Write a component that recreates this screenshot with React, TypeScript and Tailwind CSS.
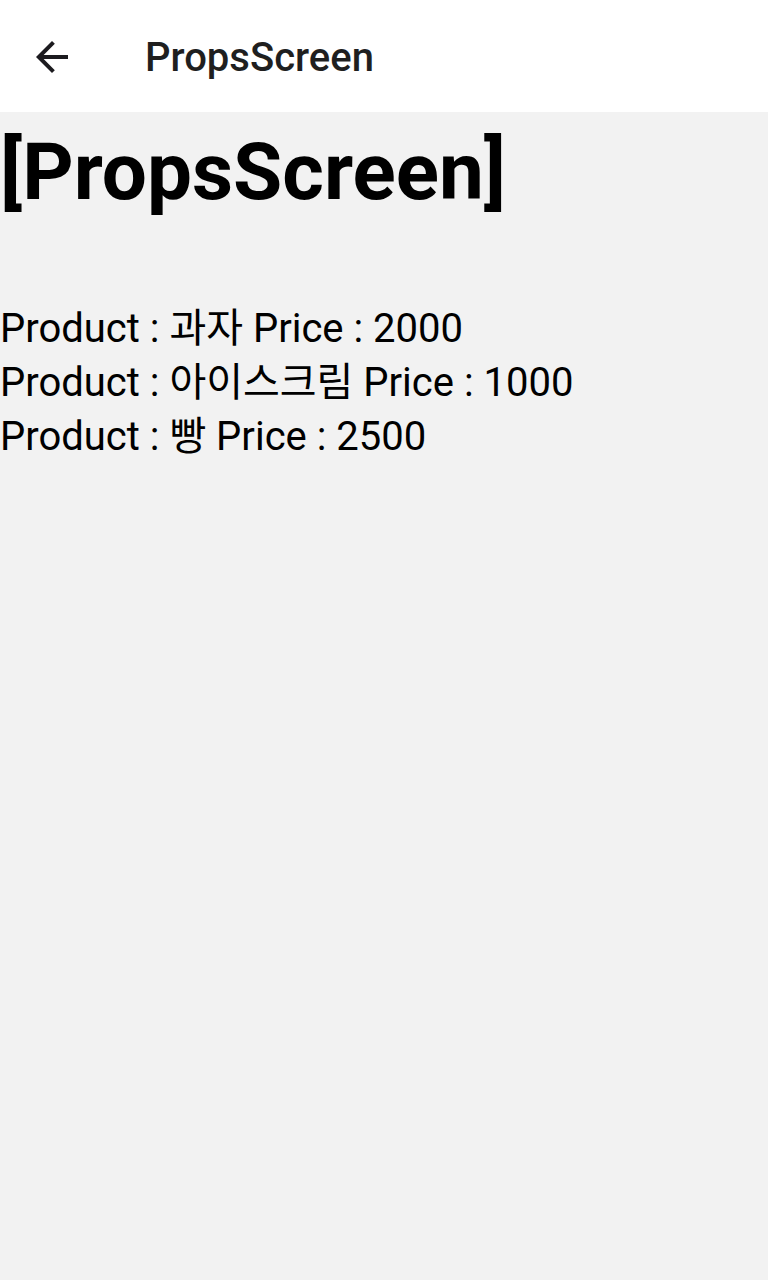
const products = [
    { name: "과자", price: 2000 },
    { name: "아이스크림", price: 1000 },
    { name: "빵", price: 2500 },
];

export default function App() {
    return (
        <div className="min-h-[1280px] bg-[#f2f2f2] font-['Roboto','Noto_Sans_CJK_KR',sans-serif] text-black">
            <header className="h-[112px] bg-white flex items-center">
                <button className="ml-[28px] mt-[2px] w-[48px] h-[48px] flex items-center justify-center text-[#1c1b1f]">
                    <svg width="48" height="48" viewBox="0 0 24 24" fill="currentColor">
                        <path d="M20 11H7.83l5.59-5.59L12 4l-8 8 8 8 1.41-1.41L7.83 13H20v-2z" />
                    </svg>
                </button>
                <h1 className="ml-[69px] mt-[4px] text-[40px] font-medium text-[#1f1f1f]">PropsScreen</h1>
            </header>
            <main>
                <h2 className="mt-[12px] text-[80px] font-bold leading-[1.2]">[PropsScreen]</h2>
                <div className="mt-[82px] flex flex-col">
                    {products.map((p) => (
                        <p key={p.name} className="text-[40px] leading-[54px]">
                            Product : {p.name} Price : {p.price}
                        </p>
                    ))}
                </div>
            </main>
        </div>
    );
}
